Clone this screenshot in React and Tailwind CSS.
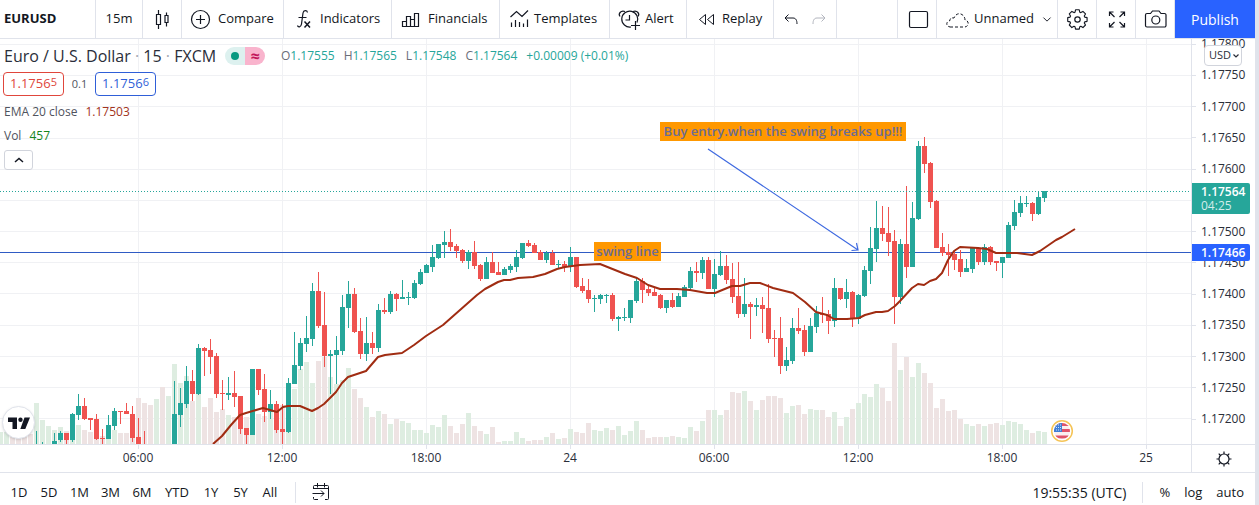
import React from "react";

// Each bar: direction (1 up, 0 down), high, low, body top, body bottom, volume top.
const BARS = [
  [1, 0, 0, 0, 0, 432], [1, 0, 0, 0, 0, 432], [0, 0, 0, 0, 0, 434], [0, 0, 0, 0, 0, 433], [0, 0, 0, 0, 0, 432],
  [0, 0, 0, 0, 0, 434], [1, 431, 444, 0, 0, 403], [1, 442, 444, 0, 0, 420], [1, 0, 0, 0, 0, 426], [1, 433, 444, 441, 444, 430],
  [1, 431, 442, 433, 440, 427], [0, 433, 444, 433, 440, 431], [1, 413, 442, 414, 440, 436], [1, 394, 420, 406, 415, 425], [0, 398, 420, 406, 419, 430],
  [0, 418, 430, 418, 420, 432], [0, 414, 440, 419, 439, 432], [0, 429, 444, 438, 439, 436], [1, 415, 439, 425, 439, 434], [1, 408, 430, 411, 426, 430],
  [0, 411, 424, 411, 412, 433], [0, 403, 414, 411, 414, 433], [0, 406, 442, 414, 438, 435], [0, 418, 444, 437, 444, 398], [0, 431, 444, 0, 0, 403],
  [0, 0, 0, 0, 0, 405], [1, 0, 0, 0, 0, 399], [0, 0, 0, 0, 0, 387], [1, 0, 0, 0, 0, 396], [1, 381, 444, 414, 444, 364],
  [1, 388, 427, 403, 415, 383], [1, 366, 408, 381, 404, 376], [0, 370, 401, 381, 394, 401], [1, 344, 395, 348, 394, 390], [0, 347, 376, 348, 351, 407],
  [0, 339, 374, 350, 357, 398], [0, 353, 398, 356, 394, 412], [0, 380, 410, 393, 394, 409], [1, 377, 400, 393, 395, 415], [0, 371, 407, 393, 397, 417],
  [0, 396, 434, 396, 429, 414], [0, 428, 444, 428, 435, 417], [1, 369, 435, 369, 435, 415], [0, 369, 395, 369, 390, 414], [0, 374, 422, 389, 412, 416],
  [1, 390, 419, 404, 412, 409], [0, 401, 433, 404, 430, 405], [0, 404, 444, 429, 432, 405], [1, 378, 433, 383, 432, 410], [1, 332, 384, 365, 384, 389],
  [1, 338, 370, 343, 366, 369], [1, 316, 352, 338, 344, 362], [1, 283, 346, 291, 339, 383], [0, 272, 328, 291, 326, 361], [0, 292, 367, 325, 356, 357],
  [1, 350, 394, 354, 356, 377], [1, 336, 384, 350, 355, 384], [1, 295, 355, 307, 351, 380], [1, 281, 328, 294, 308, 368], [0, 288, 333, 294, 332, 389],
  [0, 318, 359, 331, 354, 398], [1, 317, 361, 343, 354, 407], [0, 332, 354, 343, 348, 417], [1, 304, 352, 310, 348, 411], [0, 298, 314, 310, 312, 414],
  [1, 291, 314, 294, 312, 424], [0, 293, 311, 294, 299, 419], [1, 280, 299, 297, 299, 421], [1, 292, 305, 297, 298, 423], [1, 280, 299, 283, 298, 430],
  [1, 269, 285, 272, 284, 430], [1, 264, 273, 265, 273, 433], [1, 245, 272, 257, 267, 425], [1, 244, 259, 244, 258, 427], [1, 231, 258, 242, 245, 415],
  [0, 229, 251, 242, 247, 426], [0, 244, 258, 246, 251, 433], [0, 249, 263, 250, 261, 424], [1, 250, 269, 252, 261, 413], [0, 241, 269, 252, 266, 426],
  [0, 264, 281, 265, 279, 431], [1, 257, 279, 262, 279, 434], [0, 252, 273, 262, 273, 427], [0, 262, 275, 272, 275, 442], [1, 267, 275, 269, 275, 441],
  [1, 264, 273, 266, 270, 441], [1, 250, 272, 257, 267, 432], [1, 243, 259, 243, 258, 438], [0, 240, 247, 243, 246, 441], [0, 243, 253, 245, 253, 440],
  [0, 250, 260, 252, 260, 440], [1, 251, 263, 253, 260, 437], [0, 250, 265, 253, 265, 433], [1, 260, 269, 264, 265, 439], [0, 261, 272, 264, 267, 438],
  [1, 247, 272, 257, 267, 429], [0, 257, 288, 257, 287, 432], [0, 278, 293, 286, 291, 433], [0, 279, 303, 290, 299, 423], [1, 295, 312, 298, 299, 430],
  [1, 294, 304, 295, 299, 431], [1, 294, 303, 295, 296, 428], [0, 293, 321, 295, 319, 430], [1, 316, 331, 317, 319, 426], [1, 308, 321, 317, 318, 435],
  [1, 300, 323, 300, 318, 431], [1, 278, 303, 281, 301, 421], [0, 278, 303, 281, 290, 430], [0, 285, 296, 289, 293, 438], [0, 288, 296, 292, 296, 437],
  [0, 294, 309, 295, 308, 437], [1, 300, 313, 300, 308, 437], [0, 293, 308, 300, 307, 436], [1, 293, 307, 296, 307, 437], [1, 285, 297, 287, 297, 438],
  [1, 267, 290, 271, 288, 427], [0, 262, 282, 271, 273, 431], [1, 257, 279, 260, 273, 421], [0, 257, 289, 260, 289, 410], [1, 259, 297, 274, 289, 410],
  [1, 251, 276, 266, 275, 415], [0, 255, 284, 266, 280, 410], [0, 263, 303, 279, 297, 392], [0, 262, 318, 296, 314, 393], [1, 278, 317, 304, 314, 391],
  [0, 302, 339, 304, 307, 401], [1, 298, 316, 305, 307, 410], [0, 297, 333, 305, 309, 400], [0, 284, 343, 308, 339, 396], [0, 330, 357, 338, 339, 396],
  [0, 317, 374, 338, 366, 398], [1, 347, 371, 360, 366, 413], [1, 318, 364, 328, 361, 406], [0, 308, 334, 328, 331, 405], [0, 325, 356, 330, 352, 414],
  [1, 318, 352, 326, 352, 409], [1, 306, 333, 313, 327, 410], [0, 297, 323, 314, 315, 410], [0, 310, 334, 314, 321, 417], [1, 278, 327, 288, 321, 412],
  [0, 288, 300, 288, 299, 426], [1, 279, 308, 292, 299, 417], [0, 291, 327, 292, 319, 409], [1, 294, 324, 295, 319, 403], [1, 266, 297, 270, 296, 394],
  [1, 227, 284, 248, 271, 397], [1, 201, 262, 228, 249, 384], [0, 206, 241, 228, 234, 388], [0, 207, 256, 233, 242, 401], [0, 230, 324, 241, 297, 343],
  [1, 239, 304, 244, 297, 370], [0, 186, 278, 244, 267, 357], [1, 202, 267, 218, 267, 377], [1, 141, 220, 146, 219, 363], [0, 137, 173, 146, 164, 373],
  [0, 162, 208, 163, 202, 383], [0, 200, 248, 201, 248, 408], [0, 233, 256, 247, 253, 399], [0, 244, 276, 252, 255, 411], [0, 250, 270, 254, 260, 410],
  [0, 250, 277, 259, 272, 419], [1, 259, 272, 268, 272, 424], [1, 247, 273, 248, 269, 426], [0, 247, 265, 248, 262, 424], [1, 244, 265, 247, 262, 426],
  [0, 246, 265, 247, 262, 424], [0, 261, 271, 261, 263, 423], [1, 257, 278, 257, 263, 425], [1, 222, 258, 225, 258, 421], [1, 200, 230, 212, 226, 422],
  [1, 196, 217, 203, 213, 424], [1, 196, 207, 203, 204, 430], [0, 202, 221, 203, 214, 433], [1, 192, 215, 197, 214, 431], [1, 191, 202, 191, 198, 432],
];

const EMA =
  "213,444 222,436 231,425 240,415 246,413 263,408 277,412 283,407 288,406 300,406 312,411 318,408 324,404 336,392 342,383 348,377 366,371 378,357 385,355 402,353 414,345 426,336 443,325 460,310 477,295 485,289 498,282 504,280 510,280 518,278 533,277 545,274 557,269 565,267 580,265 600,264 610,268 625,274 637,278 648,285 660,289 677,289 690,290 707,293 715,293 732,286 740,286 750,283 760,283 773,288 793,293 805,302 816,312 827,315 834,319 847,319 859,318 865,315 876,312 882,312 888,311 895,306 900,301 912,288 918,284 924,285 930,281 936,279 942,273 948,260 954,251 960,247 978,248 987,249 996,253 1002,253 1017,253 1032,255 1040,251 1056,240 1062,237 1075,229";

const GRID_Y = [44, 75, 106, 138, 169, 200, 231, 262, 293, 325, 356, 387, 418];
const GRID_X = [138, 282, 426, 570, 714, 858, 1002, 1146];
// The sixth label gives way to the last-price tag, so only its tick is kept.
const PRICES = ["1.17800", "1.17750", "1.17700", "1.17650", "1.17600", "", "1.17500", "1.17450", "1.17400", "1.17350", "1.17300", "1.17250", "1.17200"];
const TIMES = ["06:00", "12:00", "18:00", "24", "06:00", "12:00", "18:00", "25"];
const RANGES = [["1D", "w-[30px]"], ["5D", "w-[30px]"], ["1M", "w-[31px]"], ["3M", "w-[31px]"], ["6M", "w-[32px]"], ["YTD", "w-[38px]"], ["1Y", "w-[30px]"], ["5Y", "w-[29px]"], ["All", "w-[30px]"]];

function Icon({ size = 28, children }) {
  return (
    <svg width={size} height={size} viewBox="0 0 28 28" fill="none" stroke="currentColor" strokeWidth="1" className="shrink-0" aria-hidden="true">
      {children}
    </svg>
  );
}

function Tool({ className, children, ...rest }) {
  return (
    <button type="button" className={"flex h-full shrink-0 items-center border-r border-[#e0e3eb] whitespace-nowrap " + className} {...rest}>
      {children}
    </button>
  );
}

function TopBar() {
  return (
    <header className="flex h-[39px] border-b border-[#e0e3eb] bg-white text-[13px] text-[#131722]">
      <Tool className="w-[96px] pl-1 font-bold">EURUSD</Tool>
      <Tool className="w-[47px] justify-center">15m</Tool>
      <Tool className="w-[39px] justify-center" aria-label="Candles">
        <Icon>
          <path d="M8.500 9.500h4v10h-4zM10.500 5v4.500M10.500 19.500V24M17 10.500h3v7h-3zM18.500 7.500v3M18.500 17.500v4" strokeWidth="1.200" />
        </Icon>
      </Tool>
      <Tool className="w-[102px] gap-1 pl-1">
        <Icon>
          <circle cx="14.500" cy="14.500" r="9" strokeWidth="1.200" />
          <path d="M14.500 10v9M10 14.500h9" strokeWidth="1.200" />
        </Icon>
        Compare
      </Tool>
      <Tool className="w-[108px] pl-2">
        <Icon>
          <path d="M15.500 7.500C15 5 11.500 5 11 8l-1.500 11c-.5 3.500-3.500 3.500-4 1.500M6.500 12.500h8" strokeWidth="1.200" />
          <path d="m12.500 16.500 5.500 6M18 16.500l-5.500 6" strokeWidth="1.500" />
        </Icon>
        Indicators
      </Tool>
      <Tool className="w-[108px] gap-1 pl-1">
        <Icon>
          <path d="M6.500 21.500v-5h4v5zM10.500 21.500v-10h4v10zM14.500 12v9.500h4M14.500 14.500h4M18.500 21.500v-13h4v13z" strokeWidth="1.200" />
        </Icon>
        Financials
      </Tool>
      <Tool className="w-[110px] gap-[2px] pl-1">
        <Icon>
          <path d="m6.500 12 6-5.500 5.500 5 6-6M7.500 17.500v4.500M11.500 15v7M15.500 17v5M19.500 18.500v3.500M23.500 14.500v7.500" strokeWidth="1.200" />
        </Icon>
        Templates
      </Tool>
      <Tool className="w-[77px] gap-[2px] pl-[5px]">
        <Icon>
          <path d="M22 17.500a8 8 0 1 0-6 4.500M14.500 10v5h-4" strokeWidth="1.200" />
          <path d="M5 11.500c-2-2.500.5-6.500 5-5M23 11.500c2-2.500-.5-6.500-5-5M20.500 16v9M16 20.500h9" strokeWidth="1.200" />
        </Icon>
        Alert
      </Tool>
      <Tool className="w-[87px] gap-[2px] pl-[5px]">
        <Icon>
          <path d="m13.500 9.500-6 5 6 5zM21.500 9.500l-6 5 6 5z" />
        </Icon>
        Replay
      </Tool>
      <div className="flex h-full w-[63px] shrink-0 items-center justify-center border-r border-[#e0e3eb]">
        <button type="button" aria-label="Undo">
          <Icon>
            <path d="M11.500 9.500 8 13l3.500 3.500M8 13h8c3 0 4 2.500 4 6" />
          </Icon>
        </button>
        <button type="button" aria-label="Redo" className="text-[#b2b5be]">
          <Icon>
            <path d="M16.500 9.500 20 13l-3.500 3.500M20 13h-8c-3 0-4 2.500-4 6" />
          </Icon>
        </button>
      </div>
      <div className="h-full flex-1 border-r border-[#e0e3eb]" />
      <Tool className="w-[39px] justify-center" aria-label="Select layout">
        <Icon>
          <rect x="6.500" y="6.500" width="18" height="16" rx="1.500" strokeWidth="1.200" />
        </Icon>
      </Tool>
      <Tool className="w-[121px] pl-[5px]">
        <Icon>
          <path d="M8 22h15c4.500-1 4-6.500 0-7 0-6-8-9.500-11-2-3-.5-4 .5-4 2.500-4 1-4.500 5.500 0 6.500z" strokeDasharray="3 2" />
        </Icon>
        <span className="flex-1 pl-1 text-left">Unnamed</span>
        <Icon size={20}>
          <path d="m9 12 5 5 5-5" strokeWidth="1.300" />
        </Icon>
      </Tool>
      <Tool className="w-[39px] justify-center" aria-label="Settings">
        <Icon>
          <path d="M12.900 5h4.200l.6 2.700 1.200.5 2.400-1.400 2.900 2.900-1.400 2.400.5 1.200 2.700.6v4.200l-2.700.6-.5 1.200 1.400 2.400-2.900 2.900-2.400-1.400-1.200.5-.6 2.700h-4.200l-.6-2.700-1.200-.5-2.400 1.400-2.900-2.900 1.400-2.400-.5-1.200-2.700-.6v-4.200l2.700-.6.5-1.200-1.400-2.400 2.900-2.900 2.400 1.400 1.200-.5z" transform="translate(1.200 .400) scale(.88)" strokeWidth="1.300" strokeLinejoin="round" />
          <circle cx="14.500" cy="14.500" r="2.700" strokeWidth="1.200" />
        </Icon>
      </Tool>
      <Tool className="w-[39px] justify-center" aria-label="Fullscreen mode">
        <Icon>
          <path d="M7.500 11V7H11.500M7.500 7l5 5M18.500 7H22.500V11M22.500 7l-5 5M7.500 18v4H11.500M7.500 22l5-5M18.500 22H22.500V18M22.500 22l-5-5" strokeWidth="1.200" />
        </Icon>
      </Tool>
      <Tool className="w-[39px] justify-center" aria-label="Take a snapshot">
        <Icon>
          <path d="M11.500 6h6.500l2 2.500h3.500a1.500 1.500 0 0 1 1.500 1.500v10.500a1.500 1.500 0 0 1-1.500 1.500h-17.500A1.500 1.500 0 0 1 4.500 20.500v-10.500A1.500 1.500 0 0 1 6 8.500h3.500z" strokeWidth="1.200" />
          <circle cx="14.800" cy="15" r="4" strokeWidth="1.200" />
        </Icon>
      </Tool>
      <button type="button" className="h-full w-[80px] shrink-0 bg-[#2962ff] text-[14px] text-white">Publish</button>
    </header>
  );
}

function Plot() {
  return (
    <svg viewBox="0 39 1191 405" preserveAspectRatio="xMaxYMin slice" className="block h-[405px] w-full" role="img" aria-label="EURUSD candlestick chart">
      <g fill="#f0f1f4" shapeRendering="crispEdges">
        {GRID_Y.map((y) => <rect key={y} x="0" y={y} width="1191" height="1" />)}
        {GRID_X.map((x) => <rect key={x} x={x} y="39" width="1" height="405" />)}
      </g>
      <g shapeRendering="crispEdges">
        {BARS.map((b, i) => <rect key={i} x={i * 6 - 2} y={b[5]} width="5" height={444 - b[5]} fill={b[0] ? "#deede1" : "#eee3e3"} />)}
      </g>
      <rect x="0" y="252" width="1191" height="1" fill="#2f5bc4" />
      <g shapeRendering="crispEdges">
        {BARS.map((b, i) => (
          <g key={i} fill={b[0] ? "#26a69a" : "#ef5350"}>
            {b[1] > 0 && <rect x={i * 6} y={b[1]} width="1" height={b[2] - b[1]} />}
            {b[3] > 0 && <rect x={i * 6 - 2} y={b[3]} width="5" height={Math.max(1, b[4] - b[3])} />}
          </g>
        ))}
      </g>
      <polyline points={EMA} fill="none" stroke="#a02c12" strokeWidth="2" strokeLinejoin="round" />
      <line x1="0" x2="1191" y1="191.500" y2="191.500" stroke="#26a69a" strokeDasharray="1 2" shapeRendering="crispEdges" />
      <path d="M708 149 858 250M851.500 250.500 858 250 856.500 243" fill="none" stroke="#3f6ae0" strokeWidth="1.200" />
      <g>
        <circle cx="1062" cy="431" r="10.300" fill="#fff" stroke="#f5c456" strokeWidth="1.500" />
        <clipPath id="flag"><circle cx="1062" cy="431" r="8" /></clipPath>
        <g clipPath="url(#flag)">
          <rect x="1054" y="423" width="16" height="16" fill="#fbeff0" />
          <path d="M1054 424.500h16M1054 430.500h16M1054 437h16" stroke="#e0546a" strokeWidth="3" />
          <rect x="1054" y="423" width="8" height="9" fill="#3f7fd6" />
          <path d="M1056 425h5M1056 427.500h5M1056 430h5" stroke="#cfe0f7" strokeDasharray="1 1" />
        </g>
      </g>
    </svg>
  );
}

function Legend() {
  const ohlc = [["O", "1.17555"], ["H", "1.17565"], ["L", "1.17548"], ["C", "1.17564"]];
  return (
    <div className="absolute top-0 left-0 flex flex-col items-start pl-1 text-[12px] text-[#50535e]">
      <div className="flex h-[33px] items-center whitespace-nowrap">
        <h1 className="w-[221px] text-[16px] text-[#2a2e39]">
          Euro / U.S. Dollar <span className="text-[#a3a6af]">·</span> 15 <span className="text-[#a3a6af]">·</span> FXCM
        </h1>
        <div className="flex h-[18px] w-[40px]">
          <span className="flex flex-1 items-center justify-center rounded-l-full bg-[#ddf1ef]">
            <span className="size-2 rounded-full bg-[#089981]" />
          </span>
          <span className="flex flex-1 items-center justify-center rounded-r-full bg-[#f9b4cd] text-[16px] leading-[18px] font-bold text-[#c2185b]">≈</span>
        </div>
        <div className="flex gap-[9px] pl-4 text-[#26a69a]">
          {ohlc.map(([k, v]) => <span key={k}><span className="text-[#6a6d78]">{k}</span>{v}</span>)}
          <span>+0.00009 (+0.01%)</span>
        </div>
      </div>
      <div className="-ml-px flex h-[24px] items-center text-[13px]">
        <button type="button" className="h-full w-[61px] rounded-[4px] border border-[#e0463c] bg-white text-[#e0463c]">1.1756<span className="relative -top-[2px] text-[11px]">5</span></button>
        <span className="w-[31px] text-center text-[11px]">0.1</span>
        <button type="button" className="h-full w-[61px] rounded-[4px] border border-[#2f5fd8] bg-white text-[#2f5fd8]">1.1756<span className="relative -top-[2px] text-[11px]">6</span></button>
      </div>
      <div className="mt-1 flex h-[24px] items-center gap-2">EMA 20 close <span className="text-[#a23420]">1.17503</span></div>
      <div className="flex h-[24px] items-center gap-2">Vol <span className="text-[#16851e]">457</span></div>
      <button type="button" aria-label="Collapse legend" className="mt-[2px] flex h-[20px] w-[29px] items-center justify-center rounded-[3px] border border-[#d1d4dc] bg-white text-[#131722]">
        <svg width="10" height="6" viewBox="0 0 10 6" fill="none" stroke="currentColor" strokeWidth="1.500" aria-hidden="true"><path d="m1 5 4-3.500L9 5" /></svg>
      </button>
    </div>
  );
}

function PriceAxis() {
  return (
    <aside className="relative h-[405px] w-[64px] shrink-0 overflow-hidden border-l border-[#e0e3eb] bg-white text-[12px] text-[#2a2e39]">
      <ul className="-mt-[3px] flex h-[391px] flex-col justify-between">
        {PRICES.map((p, i) => (
          <li key={i} className="flex h-4 items-center gap-[5px] leading-4">
            <span className="h-px w-1 bg-[#e0e3eb]" />
            {p}
          </li>
        ))}
      </ul>
      <label className="absolute top-[6px] left-[12px] flex h-[21px] w-[38px] items-center rounded-[4px] border border-[#d1d4dc] bg-white pl-1">
        <select aria-label="Currency" className="w-full appearance-none bg-transparent text-[11px] outline-none"><option>USD</option></select>
        <svg width="6" height="4" viewBox="0 0 6 4" fill="none" stroke="currentColor" strokeWidth="1.200" className="absolute right-[2px]" aria-hidden="true"><path d="m.5.5 2.500 2.500 2.500-2.500" /></svg>
      </label>
      <div className="absolute top-[144px] left-0 flex h-[31px] w-[58px] flex-col justify-center rounded-r-[2px] bg-[#26a69a] pl-[9px] leading-[14px] text-white">
        <span className="block h-[14px] font-semibold">1.17564</span>
        <span className="block h-[14px] text-[#d4edeb]">04:25</span>
      </div>
      <div className="absolute top-[205px] left-0 flex h-[17px] w-[58px] items-center rounded-r-[2px] bg-[#2962ff] pl-[9px] font-semibold text-white">1.17466</div>
    </aside>
  );
}

function Note({ className, children }) {
  return <div className={"absolute flex h-[19px] items-center justify-center bg-[#ff9800] text-[13px] font-semibold whitespace-nowrap text-[#6c6c94] " + className}>{children}</div>;
}

export default function App() {
  return (
    <div className="flex min-h-screen bg-[#e0e3eb] pr-1 font-['Open_Sans','Noto_Sans',sans-serif]">
      <div className="flex min-w-0 flex-1 flex-col overflow-hidden bg-white">
        <TopBar />
        <main className="flex">
          <div className="relative min-w-0 flex-1 overflow-hidden">
            <Plot />
            <Legend />
            <Note className="top-[83px] right-[285px] w-[246px]">Buy entry.when the swing breaks up!!!</Note>
            <Note className="top-[203px] right-[530px] w-[67px]">swing line</Note>
            <div className="absolute bottom-[5px] left-[2px] flex size-[33px] items-center justify-center rounded-full border border-[#e0e3eb] bg-white shadow-sm">
              <svg width="22" height="12" viewBox="0 0 22 12" fill="#131722" aria-label="TradingView">
                <path d="M0 .5h9V12H4.500V5H0zM16.500.5H22L17.300 12h-5z" />
                <circle cx="12.500" cy="2.700" r="2.200" />
              </svg>
            </div>
          </div>
          <PriceAxis />
        </main>
        <div className="flex h-[29px] border-y border-[#e0e3eb] text-[12px] text-[#2a2e39]">
          <div className="flex min-w-0 flex-1 overflow-hidden pl-[66px]">
            {TIMES.map((t, i) => (
              <div key={i} className="flex w-[144px] shrink-0 flex-col items-center leading-[18px]">
                <span className="h-1 w-px bg-[#e0e3eb]" />
                {t}
              </div>
            ))}
          </div>
          <button type="button" aria-label="Scale settings" className="flex w-[64px] items-center justify-center border-l border-[#e0e3eb] text-[#131722]">
            <svg width="16" height="16" viewBox="0 0 16 16" fill="none" stroke="currentColor" strokeWidth="1.200" aria-hidden="true">
              <circle cx="8" cy="8" r="5" />
              <path d="M8 .5V3M8 13v2.500M.5 8H3M13 8h2.500M2.700 2.700l1.800 1.800M11.500 11.500l1.800 1.800M13.300 2.700l-1.800 1.800M4.500 11.500l-1.800 1.800" />
            </svg>
          </button>
        </div>
        <footer className="flex h-[32px] items-center pt-[7px] text-[13px] text-[#131722]">
          <nav className="flex items-center pl-1" aria-label="Date range">
            {RANGES.map(([r, w]) => <button key={r} type="button" className={"shrink-0 text-center " + w}>{r}</button>)}
          </nav>
          <div className="ml-[10px] h-[21px] w-px bg-[#e0e3eb]" />
          <button type="button" aria-label="Go to date" className="ml-[11px] h-[28px]">
            <Icon>
              <path d="M6.500 10V7.500a1 1 0 0 1 1-1h13a1 1 0 0 1 1 1v12a1 1 0 0 1-1 1H18M6.500 18v1.500a1 1 0 0 0 1 1H11M6.500 9.500h15M10.500 4v4.500M17.500 4v4.500M5.500 14.500H17M14 11.500l3 3-3 3" />
            </Icon>
          </button>
          <button type="button" className="ml-auto text-[14px]">19:55:35 (UTC)</button>
          <div className="ml-4 h-[21px] w-px bg-[#e0e3eb]" />
          <div className="flex items-center gap-[14px] pr-[11px] pl-4">
            <button type="button">%</button>
            <button type="button">log</button>
            <button type="button">auto</button>
          </div>
        </footer>
      </div>
    </div>
  );
}
